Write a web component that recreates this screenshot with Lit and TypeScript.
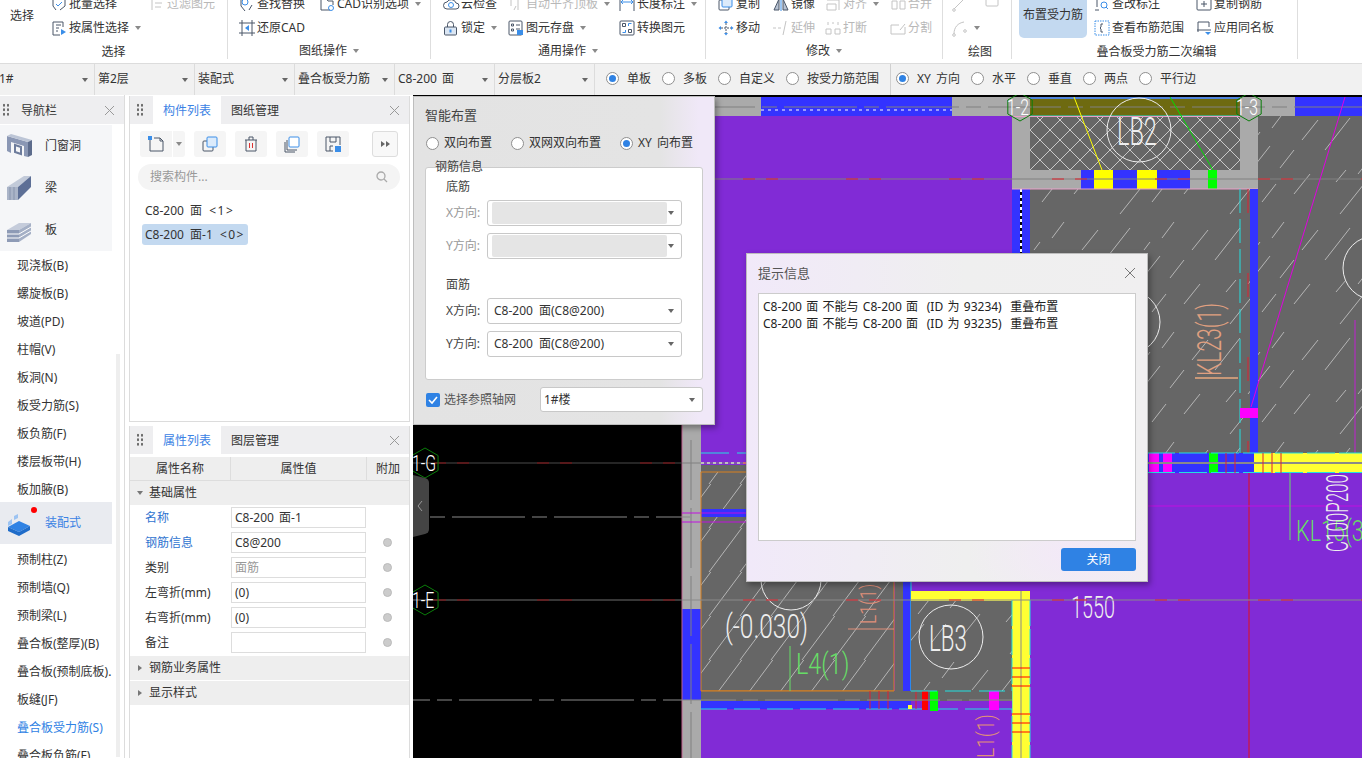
import { LitElement, html, css, svg } from "lit";
import { customElement } from "lit/decorators.js";

const S = "#4a5668";
const B = "#3b8ee8";
const G = "#c4c4c4";

// 16x16 ribbon icons
const icons: Record<string, unknown> = {
  batch: svg`<path d="M2 3v7l3 4M14 3v7l-5 4" fill="none" stroke="${S}"/><path d="M5 8l2 2 4-4" fill="none" stroke="${B}"/>`,
  attr: svg`<path d="M12 7V2H2v13h7M5 5h5M5 8h3M5 11h2" fill="none" stroke="${S}"/><path d="M10 9l5 3-5 3z" fill="${B}"/>`,
  filter: svg`<path d="M3 2v12M6 3h8M6 7h7M6 11h6" fill="none" stroke="${G}"/>`,
  find: svg`<path d="M2 2v8l4 5M13 9l-3 5" fill="none" stroke="${S}"/><circle cx="6" cy="6" r="3" fill="none" stroke="${B}"/>`,
  cad: svg`<path d="M2 2v12h9M2 2h5l2 3h5v4" fill="none" stroke="${S}"/><circle cx="12" cy="12" r="2.5" fill="none" stroke="${B}"/>`,
  restore: svg`<path d="M3 0v16M13 0v16M0 3h16M0 13h16" fill="none" stroke="${S}"/><path d="M10 5L6 8l4 3z" fill="${B}"/>`,
  cloud: svg`<path d="M4 13a3 3 0 0 1 0-7 5 5 0 0 1 9 1 3 3 0 0 1 0 6z" fill="none" stroke="${S}"/><circle cx="8" cy="9" r="2.5" fill="none" stroke="${B}"/>`,
  level: svg`<path d="M2 2h4M3 2v8M10 4v10M6 14l2-4" fill="none" stroke="${G}"/>`,
  dim: svg`<path d="M1 2v13M15 2v13" fill="none" stroke="${S}"/><path d="M2 6h12M4 4L2 6l2 2M12 4l2 2-2 2" fill="none" stroke="${B}"/>`,
  lock: svg`<rect x="1.5" y="7" width="12" height="8" rx="1" fill="#dbe6f3" stroke="${S}"/><path d="M4.5 7V4.5a3 3 0 0 1 6 0V7" fill="none" stroke="${S}"/><rect x="6.5" y="9.5" width="2" height="3" fill="${B}"/>`,
  save: svg`<rect x="1" y="1" width="13" height="14" rx="1" fill="none" stroke="${S}"/><path d="M3.5 4h2v2h-2zM3.5 9h2v2h-2zM8 5h4M8 9h4" fill="none" stroke="${S}"/><rect x="9" y="10" width="6" height="5" fill="${B}"/>`,
  convert: svg`<rect x="1" y="1" width="14" height="14" rx="1" fill="none" stroke="${S}"/><path d="M3.5 3.5h3v3h-3zM9.5 9.5h3v3h-3z" fill="none" stroke="${S}"/><path d="M9.5 6V3.5h3M6.5 10v2.500h-3" fill="none" stroke="${B}"/>`,
  copy: svg`<rect x="1" y="4" width="10" height="10" rx="1" fill="none" stroke="${S}"/><rect x="4" y="1" width="10" height="10" rx="1" fill="#dcebfb" stroke="${B}"/>`,
  mirror: svg`<path d="M6 3L1 14h5zM10 3l5 11h-5z" fill="#b8c3d3" stroke="${S}"/><path d="M8 1v14" stroke="${B}"/>`,
  align: svg`<path d="M2 4h12M2 8h9v6H2zM14 2v12" fill="none" stroke="${G}"/>`,
  merge: svg`<path d="M2 5h5v8H2zM10 5h5v8h-5z" fill="none" stroke="${G}"/>`,
  move: svg`<path d="M8 3v10M3 8h10" stroke="${S}" stroke-dasharray="2 1"/><path d="M6 3l2-2.500L10 3zM6 13l2 2.500L10 13zM3 6L.5 8 3 10zM13 6l2.500 2L13 10z" fill="${B}"/>`,
  extend: svg`<path d="M0 8h3M5 8h3M10 15l3-14" fill="none" stroke="${G}"/>`,
  cut: svg`<path d="M3 2v3M13 2v3M7 3h2" stroke="${G}" fill="none"/><path d="M1 9h5v5H1zM10 9h5v5h-5z" fill="none" stroke="${G}"/>`,
  split: svg`<path d="M15 7v7H1V5h8M10 10l5-6" fill="none" stroke="${G}"/>`,
  line: svg`<path d="M2 13L13 2" stroke="${G}"/><circle cx="2" cy="14" r="1.300" fill="none" stroke="${G}"/><circle cx="14" cy="2" r="1.300" fill="none" stroke="${G}"/>`,
  rect: svg`<rect x="2" y="0" width="12" height="10" rx="1" fill="none" stroke="${G}"/>`,
  arc: svg`<path d="M2 14C2 7 6 3 12 2" fill="none" stroke="${G}"/><circle cx="2" cy="15" r="1.300" fill="none" stroke="${G}"/><circle cx="13" cy="11" r="1.300" fill="none" stroke="${G}"/>`,
  mark: svg`<path d="M3 1v10M1 14h4" fill="none" stroke="${S}"/><circle cx="10" cy="9" r="3" fill="none" stroke="${B}"/><path d="M12 11l2 2" stroke="${B}"/>`,
  range: svg`<rect x="1" y="1" width="14" height="14" fill="none" stroke="${B}" stroke-dasharray="1.500 1"/><path d="M9 4H7v3l-1 1 1 1v3h2" fill="none" stroke="${S}"/>`,
  dup: svg`<rect x="1" y="2" width="14" height="12" rx="1" fill="none" stroke="${S}"/><path d="M5 8h6M8 5v6" stroke="${S}"/>`,
  same: svg`<path d="M2 12V2h11v5M1 10h14" fill="none" stroke="${S}"/><path d="M9 12h6l-3 3z" fill="${B}"/>`,
};

interface Item { icon: string; text?: string; off?: boolean; caret?: boolean; }
interface Group { label: string; caret?: boolean; width: number; pad: number; shift?: number; cols: string; big?: string; items: Item[]; }

const groups: Group[] = [
  { label: "选择", width: 228, pad: 10, cols: "41px 98px auto", big: "select", items: [
    { icon: "batch", text: "批量选择" }, { icon: "filter", text: "过滤图元", off: true },
    { icon: "attr", text: "按属性选择", caret: true },
  ] },
  { label: "图纸操作", caret: true, width: 203, pad: 11, cols: "80px auto", items: [
    { icon: "find", text: "查找替换" }, { icon: "cad", text: "CAD识别选项", caret: true },
    { icon: "restore", text: "还原CAD" },
  ] },
  { label: "通用操作", caret: true, width: 275, pad: 12, cols: "65px 111px auto", items: [
    { icon: "cloud", text: "云检查" }, { icon: "level", text: "自动平齐顶板", off: true, caret: true }, { icon: "dim", text: "长度标注", caret: true },
    { icon: "lock", text: "锁定", caret: true }, { icon: "save", text: "图元存盘", caret: true }, { icon: "convert", text: "转换图元" },
  ] },
  { label: "修改", caret: true, width: 237, pad: 12, cols: "55px 52px 65px auto", items: [
    { icon: "copy", text: "复制" }, { icon: "mirror", text: "镜像" }, { icon: "align", text: "对齐", off: true, caret: true }, { icon: "merge", text: "合并", off: true },
    { icon: "move", text: "移动" }, { icon: "extend", text: "延伸", off: true }, { icon: "cut", text: "打断", off: true }, { icon: "split", text: "分割", off: true },
  ] },
  { label: "绘图", width: 69, pad: 9, shift: 6, cols: "32px auto", items: [
    { icon: "line" }, { icon: "rect" }, { icon: "arc", caret: true },
  ] },
  { label: "叠合板受力筋二次编辑", width: 286, pad: 7, shift: 4, cols: "75px 102px auto", big: "place", items: [
    { icon: "mark", text: "查改标注" }, { icon: "dup", text: "复制钢筋" },
    { icon: "range", text: "查看布筋范围" }, { icon: "same", text: "应用同名板" },
  ] },
];

const combos = [
  ["1#", 96], ["第2层", 100], ["装配式", 100], ["叠合板受力筋", 100], ["C8-200 面", 100], ["分层板2", 100],
] as const;

const navTop = ["现浇板(B)", "螺旋板(B)", "坡道(PD)", "柱帽(V)", "板洞(N)", "板受力筋(S)", "板负筋(F)", "楼层板带(H)", "板加腋(B)"];
const navBottom = ["预制柱(Z)", "预制墙(Q)", "预制梁(L)", "叠合板(整厚)(B)", "叠合板(预制底板).", "板缝(JF)", "叠合板受力筋(S)", "叠合板负筋(F)"];

const props = [
  { name: "名称", value: "C8-200 面-1", blue: true, dot: false },
  { name: "钢筋信息", value: "C8@200", blue: true, dot: true },
  { name: "类别", value: "面筋", muted: true, dot: true },
  { name: "左弯折(mm)", value: "(0)", dot: true },
  { name: "右弯折(mm)", value: "(0)", dot: true },
  { name: "备注", value: "", dot: true },
];

const cad = (t: string, x: number, y: number, size: number, color: string, sx = 0.6, rot = 0) =>
  svg`<text class="cad" transform="translate(${x} ${y}) rotate(${rot}) scale(${sx} 1)" font-size="${size}" fill="${color}">${t}</text>`;

const hex = (cx: number, cy: number, r: number, t: string) => svg`
  <polygon points="${cx},${cy - r} ${cx + r * 0.87},${cy - r / 2} ${cx + r * 0.87},${cy + r / 2} ${cx},${cy + r} ${cx - r * 0.87},${cy + r / 2} ${cx - r * 0.87},${cy - r / 2}" fill="none" stroke="#0a7d0a"/>
  <text class="cad" transform="translate(${cx - 13} ${cy + 8}) scale(0.72 1)" font-size="22" fill="#fff">${t}</text>`;

const grid = (y: number, x1: number, x2: number, base: string, red: string) => svg`
  <path d="M${x1} ${y}H${x2}" stroke="${base}"/>
  <path d="M${x1} ${y}H${x2}" stroke="${red}" stroke-dasharray="12 11 12 68" stroke-dashoffset="${(x1 + 81) % 103}"/>`;

const dashed = (y: number, x1: number, x2: number, offset: number) =>
  svg`<path d="M${x1} ${y}H${x2}" stroke="#8a8a8a" stroke-dasharray="73 7 15 7" stroke-dashoffset="${offset}"/>`;

@customElement("app-root")
export class AppRoot extends LitElement {
  static styles = css`
    :host {
      display: block;
      width: 1362px;
      height: 758px;
      overflow: hidden;
      background: #fff;
      color: #333;
      font: 12px/16px "Noto Sans", "Noto Sans CJK SC", sans-serif;
    }
    svg { display: block; }
    .ribbon { display: flex; height: 63px; border-bottom: 1px solid #dcdcdc; box-sizing: content-box; overflow: hidden; background: #fff; }
    .group { height: 59px; box-sizing: border-box; border-right: 1px solid #dedede; flex: none; }
    .rows { display: grid; grid-auto-rows: 24px; margin-top: -8px; height: 47px; }
    .rb { display: flex; align-items: center; gap: 2px; white-space: nowrap; word-spacing: 2px; }
    .rb svg { width: 16px; height: 16px; flex: none; overflow: visible; }
    .rb.off { color: #b8b8b8; }
    .big { grid-row: span 2; display: flex; align-items: center; justify-content: center; white-space: nowrap; }
    .big.select { justify-content: flex-start; }
    .big.place { width: 68px; height: 46px; background: #c3d9f0; border-radius: 0 0 5px 5px; }
    .caret { width: 0; height: 0; margin-left: 4px; border: 3px solid transparent; border-top: 4px solid #8a8a8a; border-bottom: 0; flex: none; }
    .glabel { display: flex; align-items: center; justify-content: center; box-sizing: border-box; height: 22px; padding-top: 4px; white-space: nowrap; }
    .glabel.withcaret { padding-top: 2px; }
    .glabel .caret { margin-left: 6px; }

    .bar { display: flex; align-items: center; box-sizing: border-box; height: 31px; background: #f1f1f1; word-spacing: 2px; }
    .combo { display: flex; align-items: center; justify-content: space-between; box-sizing: border-box; height: 31px; padding: 0 6px 2px 3px; border-right: 1px solid #dcdcdc; flex: none; white-space: nowrap; }
    .combo:first-child { padding-left: 0; margin-left: -1px; }
    .combo .caret { border-top-color: #666; margin-top: 3px; }
    .radios { display: flex; align-items: center; gap: 11px; padding: 0 11px 2px; box-sizing: border-box; height: 31px; flex: none; }
    .radios + .radios { border-left: 1px solid #d0d0d0; padding-left: 5px; }
    .radio { display: flex; align-items: center; gap: 8px; white-space: nowrap; }
    .circle { width: 13px; height: 13px; box-sizing: border-box; border: 1px solid #8f8f8f; border-radius: 50%; background: #fff; display: flex; align-items: center; justify-content: center; flex: none; }
    .circle.on::after { content: ""; width: 7px; height: 7px; border-radius: 50%; background: #2f82e4; }

    .main { display: flex; height: 663px; }
    .nav { width: 125px; box-sizing: border-box; border-right: 1px solid #dcdcdc; flex: none; overflow: hidden; }
    .head { display: flex; align-items: center; box-sizing: border-box; height: 28px; margin-top: 1px; padding-top: 2px; background: #eeeef0; }
    .grip { width: 7px; height: 14px; flex: none; background-image: radial-gradient(circle, #666 1px, transparent 1.200px); background-size: 4px 4.500px; }
    .head .grip { margin: -2px 12px 0 2px; }
    .x { margin-left: auto; margin-right: 9px; flex: none; }
    .head .x { margin-top: -2px; }
    .navbody { display: flex; height: 634px; overflow: hidden; }
    .navlist { width: 112px; flex: none; padding-top: 1px; }
    .cat { display: flex; align-items: center; height: 42px; background: #f5f6f8; position: relative; }
    .cat svg { width: 26px; height: 26px; margin-left: 6px; flex: none; }
    .cat span { margin-left: 13px; }
    .cat.picked { background: #e9ebf0; margin: -2px 0 2px; }
    .cat.picked span { color: #3b82e4; }
    .badge { position: absolute; left: 31px; top: 5px; width: 6px; height: 6px; border-radius: 50%; background: #f00; }
    .sub { height: 28px; line-height: 28px; padding-left: 17px; white-space: nowrap; overflow: hidden; }
    .cat + .sub { margin-top: 1px; }
    .cat.picked + .sub { margin-top: 0; }
    .sub.active { color: #2f82e4; }
    .thumb { width: 4px; height: 403px; margin: 230px 0 0 4px; background: #eee; flex: none; }

    .side { width: 284px; flex: none; margin-left: 4px; background: #fff; }
    .panel { width: 281px; box-sizing: border-box; border: 1px solid #dcdcdc; border-top: 0; background: #fff; }
    .panel.list { height: 326px; }
    .panel.attr { height: 333px; margin-top: 4px; }
    .tabs { display: flex; align-items: stretch; height: 28px; background: #eeeef0; }
    .panel.list .tabs { margin-top: 1px; }
    .tabs .grip { align-self: center; margin: 0 10px 0 6px; }
    .tab { padding: 2px 10px 0; display: flex; align-items: center; white-space: nowrap; }
    .tab.on { background: #fff; color: #3b82e4; }
    .tabs .x { align-self: center; }
    .tools { display: flex; margin: 7px 0 0 10px; height: 26px; }
    .tb { width: 32px; height: 26px; background: #f5f5f5; border-radius: 3px; display: flex; align-items: center; justify-content: center; margin-right: 9px; flex: none; }
    .tb.main-btn { border-radius: 3px 0 0 3px; margin-right: 1px; }
    .tb.drop { width: 12px; border-radius: 0 3px 3px 0; }
    .tb.drop .caret { margin: 0; }
    .tb.more { width: 26px; height: 26px; box-sizing: border-box; border: 1px solid #ddd; margin: 0 0 0 14px; background: #f8f8f8; }
    .search { display: flex; align-items: center; justify-content: space-between; margin: 7px 9px 0 8px; height: 26px; padding: 0 12px; border-radius: 13px; background: #f4f4f4; color: #999; }
    .items { margin: 10px 0 0 12px; display: flex; flex-direction: column; align-items: flex-start; gap: 3px; }
    .it { height: 21px; line-height: 21px; padding: 0 3px; border-radius: 3px; white-space: nowrap; word-spacing: 3px; }
    .it i { font-style: normal; letter-spacing: 1.500px; margin-left: 1px; }
    .it.picked { background: #c3d9f0; }
    .thead { display: grid; grid-template-columns: 101px 136px 1fr; height: 24px; margin-top: 3px; background: #eee; border-bottom: 1px solid #ddd; box-sizing: border-box; }
    .thead div { display: flex; align-items: center; justify-content: center; border-right: 1px solid #ddd; }
    .thead div:last-child { border-right: 0; }
    .sec { display: flex; align-items: center; height: 24px; background: #eee; padding-left: 8px; margin-bottom: 1px; }
    .tri { width: 0; height: 0; margin-right: 7px; border: 3px solid transparent; border-left: 4px solid #777; border-right: 0; flex: none; }
    .tri.open { border: 3px solid transparent; border-top: 4px solid #777; border-bottom: 0; margin-right: 6px; margin-left: -1px; }
    .frows { height: 151px; box-sizing: border-box; margin-top: -1px; }
    .frow { display: grid; grid-template-columns: 101px 135px 1fr; align-items: center; height: 25px; }
    .frow label { padding-left: 15px; white-space: nowrap; }
    .frow label.blue { color: #2f74d0; }
    .val { height: 21px; line-height: 19px; box-sizing: border-box; border: 1px solid #ddd; padding-left: 3px; background: #fff; word-spacing: 2px; }
    .val.muted { color: #999; }
    .dot { width: 9px; height: 9px; box-sizing: border-box; border-radius: 50%; background: #ccc; border: 1px solid #bbb; justify-self: center; }

    .canvas { position: relative; flex: 1; overflow: hidden; background: #000; }
    .cad { font-family: Roboto, "Liberation Sans", sans-serif; font-weight: 300; }
    .dlg { position: absolute; box-sizing: border-box; border: 1px solid #bdbdbd; box-shadow: 2px 3px 6px rgba(0, 0, 0, .35); }
    .smart { left: 0; top: 1px; width: 302px; height: 329px; padding: 9px 0 0 11px; color: #444; background: linear-gradient(90deg, #e3e3e3 0, #e4e4e4 82%, #f0e8f8 95%); }
    .smart .ttl { font-size: 13px; line-height: 18px; }
    .opts { display: flex; margin: 11px 0 0 1px; height: 16px; color: #333; word-spacing: 2px; }
    .opts .radio { gap: 5px; }
    .opts .radio:nth-child(1) { width: 85px; }
    .opts .radio:nth-child(2) { width: 109px; }
    .fs { position: relative; box-sizing: border-box; width: 278px; height: 213px; margin-top: 16px; padding: 11px 0 0 20px; background: #fff; border: 1px solid #ccc; border-radius: 3px; }
    .legend { position: absolute; left: 9px; top: -9px; }
    .fs .hd { height: 16px; }
    .fs .hd.next { margin-top: 18px; }
    .row { display: flex; align-items: center; margin-top: 7px; }
    .fs .hd + .row { margin-top: 5px; }
    .row > span { width: 41px; flex: none; white-space: nowrap; }
    .row.dis > span { color: #999; }
    .dd { display: flex; align-items: center; justify-content: space-between; box-sizing: border-box; height: 26px; padding: 0 7px 0 6px; border: 1px solid #c8c8c8; border-radius: 3px; background: #fff; color: #333; white-space: nowrap; flex: none; word-spacing: 3px; }
    .fs .dd { width: 195px; }
    .dd .caret { border-top-color: #666; margin: 0; }
    .fill { width: 175px; height: 22px; margin-left: -2px; background: #e5e5e5; border-radius: 2px; }
    .foot { display: flex; align-items: center; margin-top: 7px; height: 25px; }
    .check { width: 14px; height: 14px; margin: 0 4px 0 1px; border-radius: 2px; background: #2f82e4; flex: none; }
    .foot .lab { width: 96px; color: #555; white-space: nowrap; }
    .foot .dd { width: 163px; height: 25px; padding-left: 3px; }
    .msg { left: 333px; top: 158px; width: 402px; height: 329px; padding: 0 11px; background:
      radial-gradient(ellipse 110px 60px at 330px 300px, #f3e8f8, transparent),
      linear-gradient(90deg, #f1e9f9 0, #efefef 55%, #f0eff0 100%); }
    .msg .top { display: flex; align-items: center; justify-content: space-between; box-sizing: border-box; height: 39px; padding-bottom: 2px; font-size: 13px; color: #555; }
    .box { box-sizing: border-box; height: 248px; width: 378px; padding: 4px 4px; border: 1px solid #ccc; background: #fff; line-height: 17px; white-space: pre; color: #222; word-spacing: 1.2px; }
    .msg .act { display: flex; justify-content: flex-end; margin-top: 7px; }
    .btn { width: 75px; height: 23px; line-height: 23px; border-radius: 3px; background: #2f82e4; color: #fff; text-align: center; }
  `;

  private ribbonIcon(name: string) {
    return html`<svg viewBox="0 0 16 16">${icons[name]}</svg>`;
  }

  private renderGroup(g: Group) {
    return html`
      <div class="group" style="width:${g.width}px;padding-left:${g.pad}px">
        <div class="rows" style="grid-template-columns:${g.cols}">
          ${g.big === "select" ? html`<div class="big select">选择</div>` : ""}
          ${g.big === "place" ? html`<div class="big place">布置受力筋</div>` : ""}
          ${g.items.map(
            (i) => html`<div class="rb ${i.off ? "off" : ""}">
              ${this.ribbonIcon(i.icon)}${i.text ?? ""}${i.caret ? html`<i class="caret"></i>` : ""}
            </div>`
          )}
        </div>
        <div class="glabel ${g.caret ? "withcaret" : ""}" style="margin-left:${(g.shift ?? 0) - g.pad}px">${g.label}${g.caret ? html`<i class="caret"></i>` : ""}</div>
      </div>
    `;
  }

  private radio(label: string, on = false) {
    return html`<div class="radio"><i class="circle ${on ? "on" : ""}"></i>${label}</div>`;
  }

  private closeX(size = 11, color = "#999") {
    return html`<svg class="x" width="${size}" height="${size}" viewBox="0 0 11 11"><path d="M1 1l9 9M10 1l-9 9" stroke="${color}" fill="none"/></svg>`;
  }

  private select(text: unknown) {
    return html`<div class="dd">${text}<i class="caret"></i></div>`;
  }

  private renderNav() {
    const cat = (icon: unknown, label: string) => html`<div class="cat"><svg viewBox="0 0 26 26">${icon}</svg><span>${label}</span></div>`;
    return html`
      <div class="nav">
        <div class="head"><i class="grip"></i>导航栏${this.closeX()}</div>
        <div class="navbody">
          <div class="navlist">
            ${cat(svg`<path d="M1 3l21 6v15l-4-1V13L5 9v11l-4-2z" fill="#8a97b4"/><path d="M9 12l6 2v7l-6-2z" fill="none" stroke="#6d7c9c" stroke-width="2"/><path d="M1 3l4-2 21 6-4 2z" fill="#bcc5d6"/><path d="M22 9l4-2v15l-4 2z" fill="#5d6c8c"/>`, "门窗洞")}
            ${cat(svg`<path d="M1 12h11v13H1z" fill="#aab4c8"/><path d="M4 12v13M8 12v13" stroke="#8794ad"/><path d="M1 12L18 1h7L12 12z" fill="#c2cad9"/><path d="M12 12L25 1v11L12 25z" fill="#5d6f96"/>`, "梁")}
            ${cat(svg`<path d="M1 13L13 6h12l-12 7z" fill="#c5ccdb"/><path d="M1 13h12v12H1z" fill="#8e9bb6"/><path d="M1 17h12M1 21h12" stroke="#fff"/><path d="M13 13L25 6v11L13 25z" fill="#a5b0c6"/><path d="M13 17l12-7M13 21l12-7" stroke="#fff"/>`, "板")}
            ${navTop.map((t) => html`<div class="sub">${t}</div>`)}
            <div class="cat picked">
              <svg viewBox="0 0 26 26"><path d="M2 12l4-3v5l-4 2zM8 6l4-2v4l-4 2z" fill="#9cc3f2"/><path d="M2 17l11-6 11 5-11 6z" fill="#2f82e4"/><path d="M2 17v4l11 5v-4zM24 16v4l-11 6v-4z" fill="#1f6cc9"/></svg>
              <span>装配式</span><i class="badge"></i>
            </div>
            ${navBottom.map((t) => html`<div class="sub ${t === "叠合板受力筋(S)" ? "active" : ""}">${t}</div>`)}
          </div>
          <div class="thumb"></div>
        </div>
      </div>
    `;
  }

  private renderListPanel() {
    const ic = (c: unknown) => html`<svg width="18" height="18" viewBox="0 0 18 18">${c}</svg>`;
    return html`
      <div class="panel list">
        <div class="tabs"><i class="grip"></i><div class="tab on">构件列表</div><div class="tab">图纸管理</div>${this.closeX()}</div>
        <div class="tools">
          <div class="tb main-btn">${ic(svg`<path d="M3 4v12h13V6l-3-3H7" fill="none" stroke="${S}"/><path d="M13 3v3h3" fill="none" stroke="${S}"/><rect x="1" y="1" width="4" height="4" fill="${B}"/>`)}</div>
          <div class="tb drop"><i class="caret"></i></div>
          <div class="tb">${ic(svg`<rect x="2" y="6" width="10" height="10" rx="1" fill="none" stroke="${S}"/><rect x="6" y="2" width="10" height="10" rx="1" fill="#dcebfb" stroke="${B}"/>`)}</div>
          <div class="tb">${ic(svg`<path d="M3 5h12M7 5V2h4v3M4 5v11h10V5" fill="none" stroke="${S}"/><path d="M7.500 8v5M10.500 8v5" stroke="#d33"/>`)}</div>
          <div class="tb">${ic(svg`<path d="M2 7v10h10M4 5v10h10" fill="none" stroke="${S}"/><rect x="6" y="2" width="10" height="10" rx="1" fill="#fff" stroke="${B}"/>`)}</div>
          <div class="tb">${ic(svg`<path d="M2 2h14v8M2 2v14h7M6 2v5h6V2M6 16v-5h3" fill="none" stroke="${S}"/><rect x="11" y="11" width="6" height="6" fill="${B}"/>`)}</div>
          <div class="tb more">${ic(svg`<path d="M5 6l4 3-4 3zM10 6l4 3-4 3z" fill="#666"/>`)}</div>
        </div>
        <div class="search">搜索构件...
          <svg width="12" height="12" viewBox="0 0 12 12"><circle cx="5" cy="5" r="4" fill="none" stroke="#aaa" stroke-width="1.300"/><path d="M8 8l3 3" stroke="#aaa" stroke-width="1.300"/></svg>
        </div>
        <div class="items">
          <div class="it">C8-200 面 <i>&lt;1&gt;</i></div>
          <div class="it picked">C8-200 面-1 <i>&lt;0&gt;</i></div>
        </div>
      </div>
    `;
  }

  private renderAttrPanel() {
    return html`
      <div class="panel attr">
        <div class="tabs"><i class="grip"></i><div class="tab on">属性列表</div><div class="tab">图层管理</div>${this.closeX()}</div>
        <div class="thead"><div>属性名称</div><div>属性值</div><div>附加</div></div>
        <div class="sec"><i class="tri open"></i>基础属性</div>
        <div class="frows">
          ${props.map(
            (p) => html`<div class="frow">
              <label class="${p.blue ? "blue" : ""}">${p.name}</label>
              <div class="val ${p.muted ? "muted" : ""}">${p.value}</div>
              ${p.dot ? html`<i class="dot"></i>` : ""}
            </div>`
          )}
        </div>
        <div class="sec"><i class="tri"></i>钢筋业务属性</div>
        <div class="sec"><i class="tri"></i>显示样式</div>
      </div>
    `;
  }

  private renderDrawing() {
    const hatch = [
      "M5 40L30 8", "M38 64L60 36", "M62 18L74 2", "M16 72L26 60", "M44 30L50 22", "M70 58L84 40", "M84 84L100 64", "M52 92L66 74", "M20 104L44 74", "M92 30L108 10",
    ];
    return html`
      <svg width="949" height="663" viewBox="413 95 949 663">
        <defs>
          <pattern id="h1" width="110" height="110" patternUnits="userSpaceOnUse">
            <rect width="110" height="110" fill="#666"/>
            ${hatch.map((d) => svg`<path d="${d}" stroke="#b5b5b5" fill="none"/>`)}
          </pattern>
          <pattern id="h2" width="31" height="44" patternUnits="userSpaceOnUse">
            <rect width="31" height="44" fill="#666"/>
            <path d="M-4 44L31 -3M27 44L62 -3" stroke="#b5b5b5" fill="none"/>
          </pattern>
          <pattern id="h3" width="20" height="20" patternUnits="userSpaceOnUse">
            <rect width="20" height="20" fill="#666"/>
            <path d="M0 0L20 20M20 0L0 20" stroke="#c8c8c8" fill="none"/>
          </pattern>
        </defs>
        <rect x="413" y="95" width="269" height="663" fill="#000"/>
        <rect x="682" y="97" width="680" height="661" fill="#812bd6"/>
        <rect x="682" y="95" width="680" height="2" fill="#000"/>

        <rect x="1030" y="116" width="332" height="337" fill="url(#h1)"/>
        <rect x="1030" y="116" width="210" height="54" fill="url(#h3)"/>
        <rect x="1012" y="189" width="18" height="70" fill="#3333ff"/>
        <path d="M1021 189V259" stroke="#000" stroke-width="2"/>
        <path d="M1021 189V259" stroke="#fff" stroke-width="2" stroke-dasharray="3 3"/>

        <rect x="682" y="97" width="79" height="19" fill="#aaa"/>
        <rect x="761" y="97" width="191" height="19" fill="#3333ff"/>
        <path d="M761 110H952" stroke="#fff" stroke-dasharray="3 4"/>
        <rect x="952" y="97" width="60" height="19" fill="#aaa"/>
        <rect x="1012" y="116" width="18" height="73" fill="#aaa"/>
        <rect x="1240" y="116" width="18" height="73" fill="#aaa"/>
        <rect x="1030" y="99" width="210" height="17" fill="#6e6a10"/>
        <path d="M1030 98H1240M1030 116H1240" stroke="#22e0e0"/>
        <rect x="1012" y="97" width="18" height="19" fill="#aaa"/>
        <rect x="1240" y="97" width="55" height="19" fill="#aaa"/>
        <rect x="1295" y="97" width="67" height="19" fill="#3333ff"/>
        <rect x="1012" y="170" width="246" height="19" fill="#aaa"/>
        <rect x="1081" y="170" width="109" height="19" fill="#3333ff"/>
        <rect x="1094" y="170" width="19" height="19" fill="#ffff00"/>
        <rect x="1137" y="170" width="20" height="19" fill="#ffff00"/>
        <rect x="1208" y="170" width="9" height="19" fill="#00ff00"/>
        <path d="M682 107H1362" stroke="#808080" stroke-dasharray="73 7 15 7"/>
        ${grid(179, 715, 1362, "#808080", "#e0202a")}
        <path d="M1012 116.500H1240M1012 189H1258" stroke="#e8a0c8"/>
        <path d="M1074 97L1102 170" stroke="#ffff00"/>
        <path d="M1170 97L1213 170" stroke="#00e000"/>
        <circle cx="1139" cy="130" r="32" fill="none" stroke="#eee"/>
        ${cad("LB2", 1117, 145, 38, "#eee", 0.62)}
        ${hex(1020, 107, 14, "1-2")}
        ${hex(1249, 107, 14, "1-3")}

        <rect x="1250" y="189" width="8" height="264" fill="#3333ff"/>
        <path d="M1240 189V453" stroke="#22e0e0" stroke-dasharray="24 6"/>
        <path d="M1248 189V453" stroke="#e02030" stroke-dasharray="24 60"/>
        <rect x="1240" y="408" width="18" height="10" fill="#ff00ff"/>
        <path d="M1251 407L1345 97" stroke="#e000e0"/>
        <path d="M1355 320V473" stroke="#c020d0"/>
        <circle cx="1375" cy="268" r="32" fill="none" stroke="#eee"/>
        <circle cx="1128" cy="322" r="32" fill="none" stroke="#eee"/>
        ${cad("KL23(1)", 1221, 376, 34, "#e0a080", 0.62, -90)}
        <path d="M1195 378H1238" stroke="#c89878" stroke-width="2"/>

        <rect x="1030" y="453" width="332" height="20" fill="#3333ff"/>
        <rect x="1254" y="453" width="108" height="20" fill="#ffff33"/>
        <rect x="1149" y="453" width="10" height="20" fill="#ff00ff"/>
        <rect x="1163" y="453" width="9" height="20" fill="#ff00ff"/>
        <rect x="1209" y="453" width="9" height="20" fill="#00ff00"/>
        <path d="M1147 463H1362" stroke="#8a8a8a" stroke-width="2"/>
        <path d="M1147 453H1362M1147 472.500H1362" stroke="#22e0e0" stroke-dasharray="28 4"/>
        <path d="M1226 453V473M1235 453V473M1263 453V473M1272 453V473M1281 453V473" stroke="#e02030"/>
        <path d="M1249 473V758" stroke="#e0101c"/>
        <path d="M1147 506H1362" stroke="#c010e0"/>
        <path d="M1290 473V540" stroke="#66dd66"/>
        ${cad("KL15(3)", 1296, 541, 30, "#66dd66", 0.72)}
        ${cad("C100P200", 1348, 552, 32, "#eee", 0.53, -90)}
        ${cad("1550", 1071, 618, 32, "#eee", 0.62)}

        <rect x="682" y="97" width="19" height="512" fill="#aaa"/>
        <rect x="682" y="609" width="19" height="91" fill="#3333ff"/>
        <rect x="682" y="700" width="19" height="58" fill="#aaa"/>
        <path d="M682 97V758" stroke="#c06090"/>
        <path d="M691 440V758" stroke="#808080" stroke-dasharray="60 8"/>
        <path d="M701 453H746" stroke="#22e0e0" stroke-dasharray="28 8"/>
        <rect x="701" y="465" width="45" height="7" fill="#666"/>
        <path d="M701 463H746" stroke="#fff" stroke-width="2" stroke-dasharray="3 3"/>
        <rect x="701" y="472" width="193" height="219" fill="url(#h2)"/>
        <rect x="701" y="509" width="60" height="8" fill="#3333ff"/>
        <path d="M682 513H760M682 522H760" stroke="#c010e0"/>
        <path d="M701 472H760M701 472V691H894V582" stroke="#d9801f" fill="none"/>
        <rect x="895" y="582" width="8" height="109" fill="#666"/>
        <rect x="903" y="582" width="8" height="118" fill="#3333ff"/>
        <path d="M911 582V700" stroke="#22e0e0"/>

        <rect x="911" y="591" width="119" height="10" fill="#ffff33"/>
        <rect x="911" y="601" width="101" height="90" fill="url(#h1)"/>
        <rect x="1012" y="591" width="18" height="167" fill="#ffff33"/>
        <path d="M1012 600V758M1030 600V758" stroke="#22e0e0" stroke-dasharray="26 3"/>
        <path d="M1021 591V758" stroke="#8a8a8a"/>
        <path d="M1012 668H1030M1012 677H1030M1012 686H1030M1012 714H1030M1012 723H1030M1012 732H1030" stroke="#f00"/>
        <rect x="701" y="691" width="311" height="10" fill="#666"/>
        <rect x="701" y="701" width="311" height="8" fill="#812bd6"/>
        <rect x="701" y="701" width="210" height="8" fill="#3333ff"/>
        <path d="M701 709H1012" stroke="#22e0e0" stroke-dasharray="26 7"/>
        <path d="M701 691H894" stroke="#d9801f"/>
        <path d="M870 691V709M879 691V709M888 691V709M916 691V709" stroke="#e02030"/>
        <rect x="908" y="705" width="4" height="4" fill="#ffff33"/>
        <rect x="922" y="691" width="6" height="19" fill="#f00"/>
        <rect x="930" y="691" width="8" height="20" fill="#00ff00"/>
        <rect x="989" y="691" width="10" height="19" fill="#ff00ff"/>
        <path d="M911 691H1012" stroke="#22e0e0" stroke-dasharray="26 8"/>
        <circle cx="951" cy="637" r="32" fill="none" stroke="#eee"/>
        ${cad("LB3", 929, 651, 36, "#eee", 0.62)}
        <circle cx="791" cy="580" r="30" fill="none" stroke="#eee"/>
        ${cad("(-0.030)", 725, 638, 34, "#eee", 0.72)}
        ${cad("L4(1)", 796, 674, 30, "#66dd66", 0.78)}
        <path d="M790 646V691" stroke="#66dd66"/>
        ${cad("L1(1)", 876, 624, 22, "#e0907a", 0.8, -90)}
        <path d="M848 629H894" stroke="#e0907a"/>
        ${cad("L1(1)", 994, 758, 24, "#e0907a", 0.8, -90)}

        ${grid(463, 413, 682, "#4a4a4a", "#8a0d10")}
        ${grid(463, 682, 746, "#808080", "#e0202a")}
        ${grid(600, 413, 682, "#6e6e6e", "#8a0d10")}
        ${grid(600, 682, 1362, "#8a8a8a", "#e0202a")}
        ${dashed(517, 430, 690, 80)}
        ${dashed(700, 413, 1012, 56)}
        ${hex(425, 463, 15, "1-G")}
        ${hex(425, 600, 15, "1-E")}

        <path d="M413 475L425 478Q429 479 429 483V529Q429 533 425 534L413 537z" fill="#444"/>
        <path d="M422 501L418 506L422 511" fill="none" stroke="#999"/>
      </svg>
    `;
  }

  render() {
    return html`
      <div class="ribbon">${groups.map((g) => this.renderGroup(g))}</div>
      <div class="bar">
        ${combos.map(([t, w]) => html`<div class="combo" style="width:${w}px">${t}<i class="caret"></i></div>`)}
        <div class="radios">
          ${this.radio("单板", true)}${this.radio("多板")}${this.radio("自定义")}${this.radio("按受力筋范围")}
        </div>
        <div class="radios">
          ${this.radio("XY 方向", true)}${this.radio("水平")}${this.radio("垂直")}${this.radio("两点")}${this.radio("平行边")}
        </div>
      </div>
      <div class="main">
        ${this.renderNav()}
        <div class="side">${this.renderListPanel()}${this.renderAttrPanel()}</div>
        <div class="canvas">
          ${this.renderDrawing()}
          <div class="dlg smart">
            <div class="ttl">智能布置</div>
            <div class="opts">${this.radio("双向布置")}${this.radio("双网双向布置")}${this.radio("XY 向布置", true)}</div>
            <div class="fs">
              <div class="legend">钢筋信息</div>
              <div class="hd">底筋</div>
              <div class="row dis"><span>X方向:</span>${this.select(html`<div class="fill"></div>`)}</div>
              <div class="row dis"><span>Y方向:</span>${this.select(html`<div class="fill"></div>`)}</div>
              <div class="hd next">面筋</div>
              <div class="row"><span>X方向:</span>${this.select("C8-200 面(C8@200)")}</div>
              <div class="row"><span>Y方向:</span>${this.select("C8-200 面(C8@200)")}</div>
            </div>
            <div class="foot">
              <svg class="check" viewBox="0 0 14 14"><path d="M3 7l3 3 5-6" fill="none" stroke="#fff" stroke-width="1.600"/></svg>
              <div class="lab">选择参照轴网</div>
              ${this.select("1#楼")}
            </div>
          </div>
          <div class="dlg msg">
            <div class="top">提示信息<svg width="12" height="12" viewBox="0 0 12 12"><path d="M1 1l10 10M11 1L1 11" stroke="#777" fill="none"/></svg></div>
            <div class="box">C8-200 面 不能与 C8-200 面  (ID 为 93234)  重叠布置
C8-200 面 不能与 C8-200 面  (ID 为 93235)  重叠布置</div>
            <div class="act"><div class="btn">关闭</div></div>
          </div>
        </div>
      </div>
    `;
  }
}
